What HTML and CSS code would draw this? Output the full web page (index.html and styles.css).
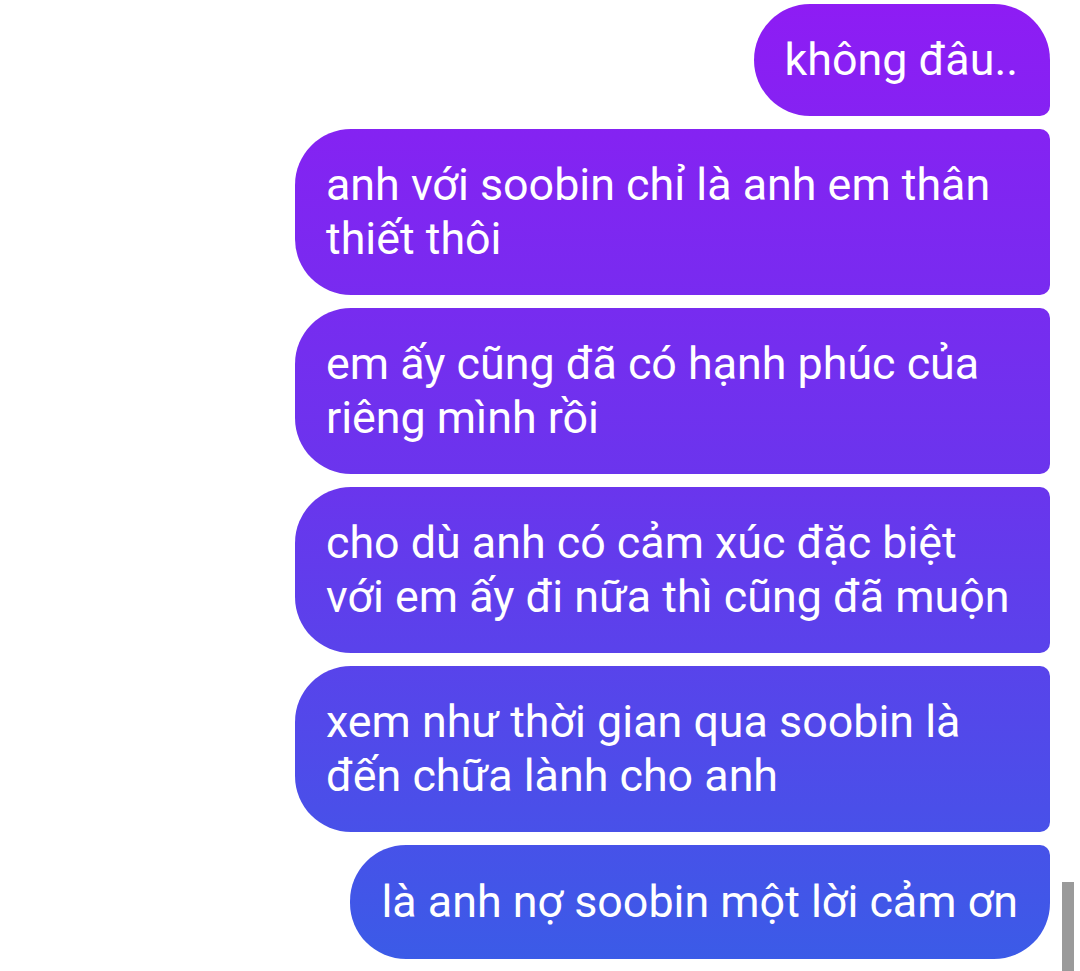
FILE: index.html
```html
<!DOCTYPE html>
<html lang="vi">
<head>
  <meta charset="UTF-8">
  <meta name="viewport" content="width=device-width, initial-scale=1.0">
  <title>Chat</title>
  <link rel="stylesheet" href="styles.css">
</head>
<body>
  <div class="thread">
    <div class="bubble first">không đâu..</div>
    <div class="bubble">anh với soobin chỉ là anh em thân thiết thôi</div>
    <div class="bubble">em ấy cũng đã có hạnh phúc của riêng mình rồi</div>
    <div class="bubble">cho dù anh có cảm xúc đặc biệt với em ấy đi nữa thì cũng đã muộn</div>
    <div class="bubble">xem như thời gian qua soobin là đến chữa lành cho anh</div>
    <div class="bubble last">là anh nợ soobin một lời cảm ơn</div>
  </div>

  <div class="scrollbar"></div>
</body>
</html>
```

FILE: styles.css
```css
body {
  margin: 0;
  padding: 0;
  background-color: #fff;
  font-family: Roboto, 'Noto Sans', sans-serif;
  height: 971px;
  overflow: hidden;
}

.thread {
  display: flex;
  flex-direction: column;
  align-items: flex-end;
  gap: 13px;
  padding: 4px 30px 0 0;
}

.bubble {
  max-width: 692px;
  padding: 29px 32px 29px 31px;
  font-size: 44.8px;
  line-height: 54px;
  color: #fff;
  border-radius: 56px 10px 10px 56px;
  background: linear-gradient(to bottom, #8e1cf4 0%, #6a35ed 50%, #3a5ce7 100%) fixed;
}

.bubble.first {
  border-top-right-radius: 56px;
}

.bubble.last {
  padding-top: 30px;
  padding-bottom: 30px;
  border-bottom-right-radius: 56px;
}

.scrollbar {
  position: absolute;
  left: 1062px;
  top: 882px;
  width: 12px;
  height: 89px;
  background-color: #9a9a9a;
}
```
